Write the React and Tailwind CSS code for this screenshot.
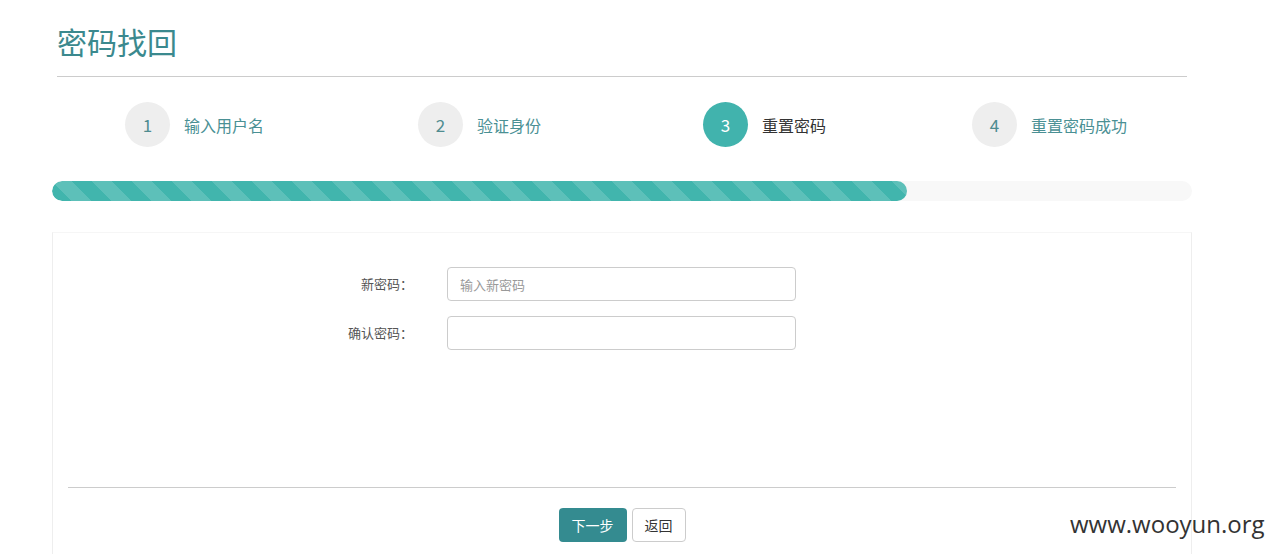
import React from "react";

const steps = [
  { n: "1", label: "输入用户名", active: false },
  { n: "2", label: "验证身份", active: false },
  { n: "3", label: "重置密码", active: true },
  { n: "4", label: "重置密码成功", active: false },
];

export default function App() {
  return (
    <div
      className="relative w-[1276px] h-[554px] overflow-hidden bg-white"
      style={{ fontFamily: '"Noto Sans CJK SC", "Noto Sans", sans-serif' }}
    >
      <div className="ml-[52px] w-[1140px]">
        <div className="mx-[5px]">
          <h1 className="pt-[23px] pb-[17px] text-[30px] leading-[36px] text-[#3b898e] font-normal">
            密码找回
          </h1>
          <div className="h-px bg-[#cccccc]" />
        </div>

        <div className="grid grid-cols-4 mt-[25px]">
          {steps.map((s) => (
            <div key={s.n} className="flex items-center justify-center gap-[14px]">
              <div
                className={
                  s.active
                    ? "w-[45px] h-[45px] rounded-full bg-[#41b3ad] text-white flex items-center justify-center text-[17px]"
                    : "w-[45px] h-[45px] rounded-full bg-[#eeeeee] text-[#4f8c90] flex items-center justify-center text-[17px]"
                }
              >
                {s.n}
              </div>
              <span
                className={
                  s.active
                    ? "text-[16px] text-[#333333]"
                    : "text-[16px] text-[#4a9094]"
                }
              >
                {s.label}
              </span>
            </div>
          ))}
        </div>

        <div className="mt-[34px] h-[20px] rounded-full bg-[#f8f8f8] overflow-hidden">
          <div
            className="h-full w-3/4 rounded-full bg-[#41b5ad] bg-[length:40px_40px]"
            style={{
              backgroundImage:
                "linear-gradient(45deg, rgba(255,255,255,.15) 25%, transparent 25%, transparent 50%, rgba(255,255,255,.15) 50%, rgba(255,255,255,.15) 75%, transparent 75%, transparent)",
            }}
          />
        </div>

        <div className="mt-[31px] border border-[#eeeeee] border-t-[#f6f6f6] px-[15px] pt-[34px] h-[340px]">
          <div className="flex flex-col gap-[15px]">
            <div className="flex items-center">
              <label className="w-[345px] text-right text-[13px] text-[#555555] [text-spacing-trim:space-all]">新密码：</label>
              <input
                type="password"
                placeholder="输入新密码"
                className="ml-[34px] w-[349px] h-[34px] rounded-[4px] border border-[#cccccc] px-[12px] text-[13px] placeholder:text-[#999999] outline-none"
              />
            </div>
            <div className="flex items-center">
              <label className="w-[345px] text-right text-[13px] text-[#555555] [text-spacing-trim:space-all]">确认密码：</label>
              <input
                type="password"
                className="ml-[34px] w-[349px] h-[34px] rounded-[4px] border border-[#cccccc] px-[12px] text-[13px] outline-none"
              />
            </div>
          </div>

          <div className="mt-[137px] h-px bg-[#cccccc]" />

          <div className="mt-[20px] flex justify-center gap-[5px]">
            <button className="w-[68px] h-[34px] rounded-[4px] bg-[#348b90] text-white text-[14px]">
              下一步
            </button>
            <button className="w-[54px] h-[34px] rounded-[4px] bg-white border border-[#cccccc] text-[#333333] text-[14px]">
              返回
            </button>
          </div>
        </div>
      </div>

      <div
        className="absolute left-[1070px] top-[507px] text-[24px] leading-[34px] text-[#333333]"
        style={{ fontFamily: '"Open Sans", sans-serif' }}
      >
        www.wooyun.org
      </div>
    </div>
  );
}
